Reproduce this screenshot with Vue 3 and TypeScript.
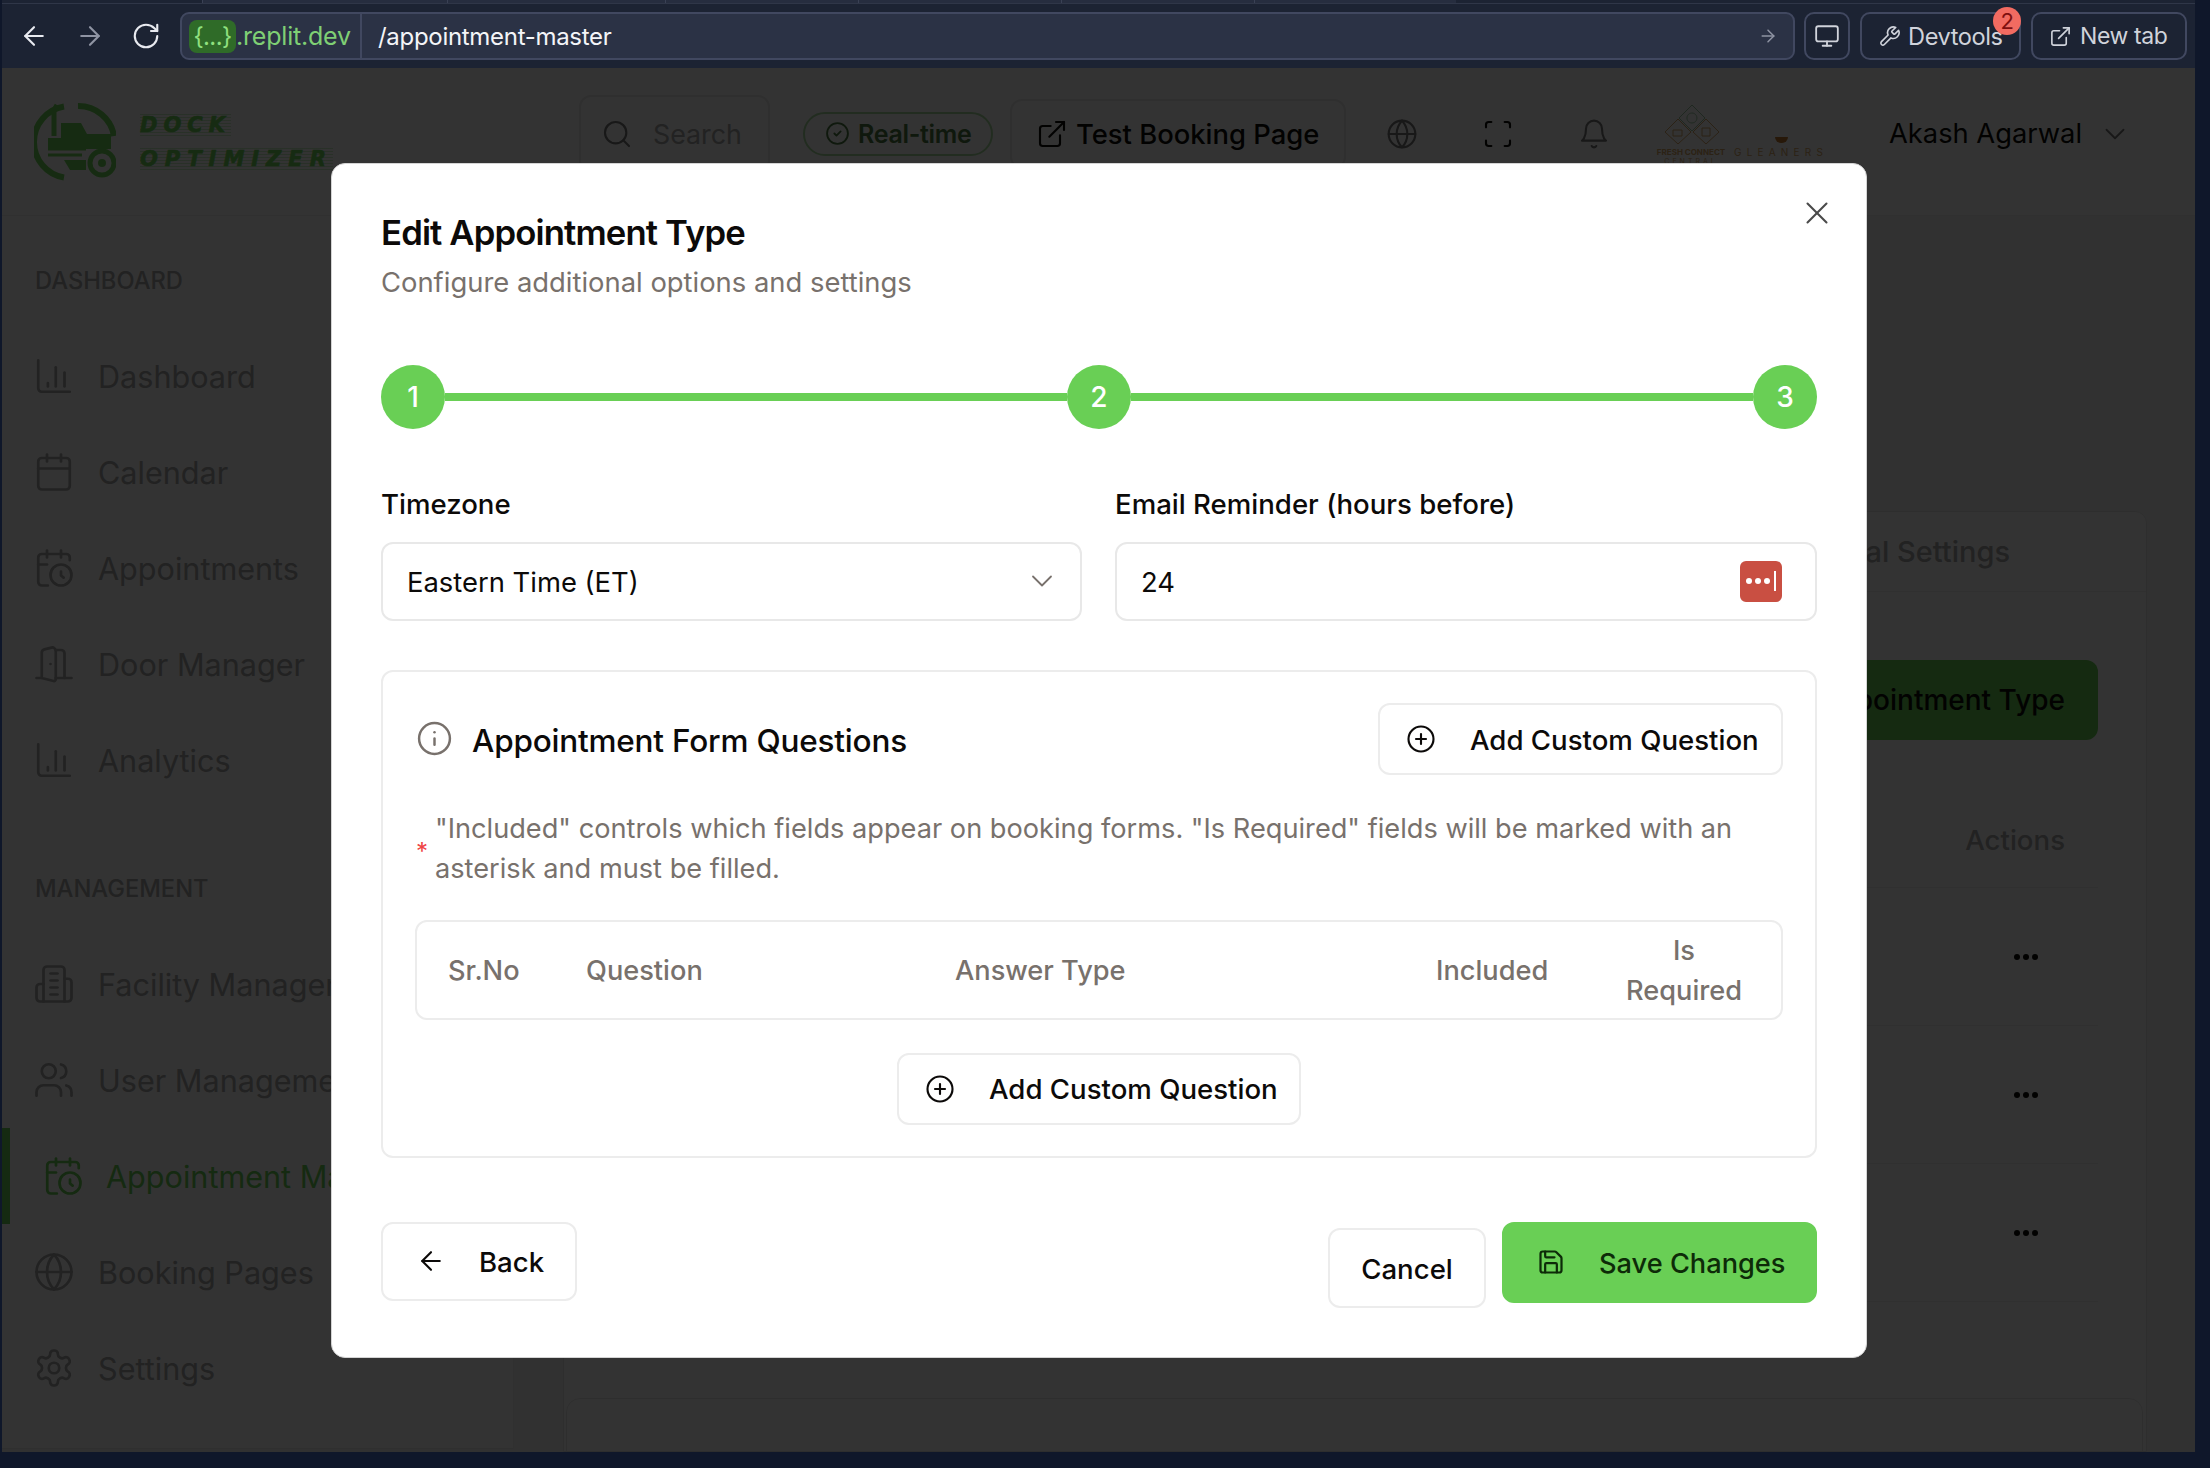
<script setup lang="ts">
import { h, type FunctionalComponent } from 'vue'

const circle = (cx: number, cy: number, r: number) =>
  `M${cx + r} ${cy}a${r} ${r} 0 1 1-${2 * r} 0 ${r} ${r} 0 1 1 ${2 * r} 0`

const paths: Record<string, string[]> = {
  chart: ['M3 3v16a2 2 0 0 0 2 2h16', 'M8.5 18v-2', 'M13 18V7', 'M18 18v-8'],
  calendar: ['M8 2v4', 'M16 2v4', 'M5 4h14a2 2 0 0 1 2 2v14a2 2 0 0 1-2 2H5a2 2 0 0 1-2-2V6a2 2 0 0 1 2-2z', 'M3 10h18'],
  calClock: ['M21 7.5V6a2 2 0 0 0-2-2H5a2 2 0 0 0-2 2v14a2 2 0 0 0 2 2h3.5', 'M16 2v4', 'M8 2v4', 'M3 10h5', 'M17.5 17.5 16 16.3V14', circle(16, 16, 6)],
  door: ['M13 20h9', 'M13 4.562v16.157a1 1 0 0 1-1.242.97L5 20V5.562a2 2 0 0 1 1.515-1.94l4-1A2 2 0 0 1 13 4.561z', 'M13 4h3a2 2 0 0 1 2 2v14', 'M10 12h-.01', 'M2 20h3'],
  building: ['M6 22V4a2 2 0 0 1 2-2h8a2 2 0 0 1 2 2v18Z', 'M6 12H4a2 2 0 0 0-2 2v6a2 2 0 0 0 2 2h2', 'M18 9h2a2 2 0 0 1 2 2v9a2 2 0 0 1-2 2h-2', 'M10 6h4', 'M10 10h4', 'M10 14h4', 'M10 18h4'],
  users: ['M16 21v-2a4 4 0 0 0-4-4H6a4 4 0 0 0-4 4v2', circle(9, 7, 4), 'M22 21v-2a4 4 0 0 0-3-3.87', 'M16 3.13a4 4 0 0 1 0 7.75'],
  globe: [circle(12, 12, 10), 'M12 2a14.5 14.5 0 0 0 0 20 14.5 14.5 0 0 0 0-20', 'M2 12h20'],
  settings: ['M12.22 2h-.44a2 2 0 0 0-2 2v.18a2 2 0 0 1-1 1.73l-.43.25a2 2 0 0 1-2 0l-.15-.08a2 2 0 0 0-2.73.73l-.22.38a2 2 0 0 0 .73 2.73l.15.1a2 2 0 0 1 1 1.72v.51a2 2 0 0 1-1 1.74l-.15.09a2 2 0 0 0-.73 2.73l.22.38a2 2 0 0 0 2.73.73l.15-.08a2 2 0 0 1 2 0l.43.25a2 2 0 0 1 1 1.73V20a2 2 0 0 0 2 2h.44a2 2 0 0 0 2-2v-.18a2 2 0 0 1 1-1.73l.43-.25a2 2 0 0 1 2 0l.15.08a2 2 0 0 0 2.73-.73l.22-.39a2 2 0 0 0-.73-2.73l-.15-.08a2 2 0 0 1-1-1.74v-.5a2 2 0 0 1 1-1.74l.15-.09a2 2 0 0 0 .73-2.73l-.22-.38a2 2 0 0 0-2.73-.73l-.15.08a2 2 0 0 1-2 0l-.43-.25a2 2 0 0 1-1-1.73V4a2 2 0 0 0-2-2z', circle(12, 12, 3)],
  search: [circle(11, 11, 8), 'm21 21-4.3-4.3'],
  check: [circle(12, 12, 10), 'm9 12 2 2 4-4'],
  external: ['M15 3h6v6', 'M10 14 21 3', 'M18 13v6a2 2 0 0 1-2 2H5a2 2 0 0 1-2-2V8a2 2 0 0 1 2-2h6'],
  frame: ['M3 7V5a2 2 0 0 1 2-2h2', 'M17 3h2a2 2 0 0 1 2 2v2', 'M21 17v2a2 2 0 0 1-2 2h-2', 'M7 21H5a2 2 0 0 1-2-2v-2'],
  bell: ['M6 8a6 6 0 0 1 12 0c0 7 3 9 3 9H3s3-2 3-9', 'M10.3 21a1.94 1.94 0 0 0 3.4 0'],
  chevron: ['m6 9 6 6 6-6'],
  wrench: ['M14.7 6.3a1 1 0 0 0 0 1.4l1.6 1.6a1 1 0 0 0 1.4 0l3.77-3.77a6 6 0 0 1-7.94 7.94l-6.91 6.91a2.12 2.12 0 0 1-3-3l6.91-6.91a6 6 0 0 1 7.94-7.94l-3.76 3.76z'],
  monitor: ['M4 3h16a2 2 0 0 1 2 2v10a2 2 0 0 1-2 2H4a2 2 0 0 1-2-2V5a2 2 0 0 1 2-2z', 'M8 21h8', 'M12 17v4'],
  save: ['M15.2 3a2 2 0 0 1 1.4.6l3.8 3.8a2 2 0 0 1 .6 1.4V19a2 2 0 0 1-2 2H5a2 2 0 0 1-2-2V5a2 2 0 0 1 2-2z', 'M17 21v-7a1 1 0 0 0-1-1H8a1 1 0 0 0-1 1v7', 'M7 3v4a1 1 0 0 0 1 1h7'],
  info: [circle(12, 12, 10), 'M12 16v-4', 'M12 8h.01'],
  plus: [circle(12, 12, 10), 'M8 12h8', 'M12 8v8'],
  back: ['m12 19-7-7 7-7', 'M19 12H5'],
  forward: ['M5 12h14', 'm12 5 7 7-7 7'],
  close: ['M18 6 6 18', 'm6 6 12 12'],
  reload: ['M21 12a9 9 0 1 1-9-9c2.52 0 4.93 1 6.74 2.74L21 8', 'M21 3v5h-5'],
}

const Icon: FunctionalComponent<{ name: string }> = (props) =>
  h(
    'svg',
    { viewBox: '0 0 24 24', fill: 'none', stroke: 'currentColor', 'stroke-linecap': 'round', 'stroke-linejoin': 'round' },
    paths[props.name].map((d) => h('path', { d })),
  )
Icon.props = ['name']

const dashboardNav = [
  { icon: 'chart', label: 'Dashboard' },
  { icon: 'calendar', label: 'Calendar' },
  { icon: 'calClock', label: 'Appointments' },
  { icon: 'door', label: 'Door Manager' },
  { icon: 'chart', label: 'Analytics' },
]
const managementNav = [
  { icon: 'building', label: 'Facility Management', active: false },
  { icon: 'users', label: 'User Management', active: false },
  { icon: 'calClock', label: 'Appointment Master', active: true },
  { icon: 'globe', label: 'Booking Pages', active: false },
  { icon: 'settings', label: 'Settings', active: false },
]
const tabWidths = [245, 218, 193, 203, 193, 202]
</script>

<template>
  <div class="root">
    <div class="tabstrip">
      <span v-for="(w, i) in tabWidths" :key="i" class="tabcell" :style="{ width: w + 'px' }"></span>
    </div>
    <div class="toolbar">
      <Icon name="back" class="nav-i first" />
      <Icon name="forward" class="nav-i dim" />
      <Icon name="reload" class="nav-i" />
      <div class="address">
        <span class="chip">{...}</span>
        <span class="domain">.replit.dev</span>
        <span class="path">/appointment-master</span>
        <Icon name="forward" class="go" />
      </div>
      <button class="tbtn mon"><Icon name="monitor" class="t-i big" /></button>
      <button class="tbtn dev">
        <Icon name="wrench" class="t-i" />Devtools
        <span class="badge">2</span>
      </button>
      <button class="tbtn newtab"><Icon name="external" class="t-i" />New tab</button>
    </div>

    <div class="page">
      <header class="hdr">
        <div class="brand">
          <svg class="truck" viewBox="0 0 82 80" fill="none">
            <path d="M30 4.5A36 36 0 0 0 30 75.5" stroke="#70d85a" stroke-width="6" />
            <path d="M44 4a36 36 0 0 1 36 30" stroke="#70d85a" stroke-width="6" />
            <path d="M20 8v26M20 8l3-5" stroke="#70d85a" stroke-width="5" />
            <path d="M14 36h13V21h20l6 11h24v15H14z" fill="#70d85a" />
            <path d="M14 41h50M14 47h38M14 53h34" stroke="#70d85a" stroke-width="3" />
            <path d="M30 58h22v10H36" fill="#70d85a" />
            <path d="M68 61m-12 0a12 12 0 1 1 24 0 12 12 0 1 1-24 0" stroke="#70d85a" stroke-width="5" fill="#fff" />
            <path d="M68 61m-4 0a4 4 0 1 1 8 0 4 4 0 1 1-8 0" fill="#70d85a" />
          </svg>
          <div class="brandtext">
            <span class="bline">DOCK</span>
            <span class="bline opt">OPTIMIZER</span>
          </div>
        </div>
        <div class="searchbox"><Icon name="search" class="h-i" /><span>Search</span></div>
        <div class="pill"><Icon name="check" class="p-i" />Real-time</div>
        <div class="testbtn"><Icon name="external" class="h-i dark" />Test Booking Page</div>
        <div class="hicon first"><Icon name="globe" class="h-i" /></div>
        <div class="hicon"><Icon name="frame" class="h-i dark" /></div>
        <div class="hicon"><Icon name="bell" class="h-i" /></div>
        <div class="partners">
          <div class="fresh">
            <svg class="diamonds" viewBox="0 0 78 40" fill="none">
              <path d="M40 1l13 13-13 13-13-13z" stroke="#9ac9a0" />
              <path d="M40 9a5 5 0 1 1-.1 0" stroke="#9ac9a0" />
              <path d="M26 15l13 13-13 12-13-12z" stroke="#d8a868" />
              <path d="M54 15l13 13-13 12-13-12z" stroke="#d8a868" />
              <path d="M21 26h9v6h-9zM50 24h8v8h-8z" stroke="#d8a868" />
            </svg>
            <span class="fc">FRESH CONNECT</span>
            <span class="central">CENTRAL</span>
          </div>
          <div class="gleaners">
            <span class="bowl"></span>
            <span class="gl">GLEANERS</span>
          </div>
        </div>
        <div class="user">Akash Agarwal</div>
        <Icon name="chevron" class="u-chev" />
      </header>

      <div class="body">
        <aside class="side">
          <div class="sec first">DASHBOARD</div>
          <div v-for="item in dashboardNav" :key="item.label" class="item">
            <Icon :name="item.icon" class="s-i" /><span class="s-t">{{ item.label }}</span>
          </div>
          <div class="sec second">MANAGEMENT</div>
          <div v-for="item in managementNav" :key="item.label" class="item" :class="{ active: item.active }">
            <Icon :name="item.icon" class="s-i" /><span class="s-t">{{ item.label }}</span>
          </div>
        </aside>
        <main class="main">
          <section class="panel">
            <div class="ptabs"><span>General Settings</span></div>
            <div class="pbar"><span class="newbtn">New Appointment Type</span></div>
            <div class="thead"><span>Actions</span></div>
            <div v-for="n in 3" :key="n" class="trow"><span class="dots"><i></i><i></i><i></i></span></div>
            <div class="card2"></div>
          </section>
        </main>
      </div>

      <div class="overlay">
        <div class="modal">
          <Icon name="close" class="closex" />
          <h2 class="title">Edit Appointment Type</h2>
          <p class="sub">Configure additional options and settings</p>

          <div class="stepper">
            <span class="dot">1</span><span class="bar"></span>
            <span class="dot">2</span><span class="bar"></span>
            <span class="dot">3</span>
          </div>

          <div class="fields">
            <div class="f left">
              <label class="lab">Timezone</label>
              <div class="inp">
                <span>Eastern Time (ET)</span>
                <Icon name="chevron" class="sel-chev" />
              </div>
            </div>
            <div class="f right">
              <label class="lab">Email Reminder (hours before)</label>
              <div class="inp">
                <span>24</span>
                <span class="pw"><i></i><i></i><i></i><b></b></span>
              </div>
            </div>
          </div>

          <section class="qcard">
            <div class="qhead">
              <div class="qtitle"><Icon name="info" class="info-i" /><h3>Appointment Form Questions</h3></div>
              <button class="btn add"><Icon name="plus" class="plus-i" />Add Custom Question</button>
            </div>
            <div class="hint">
              <span class="ast">*</span>
              <p>"Included" controls which fields appear on booking forms. "Is Required" fields will be marked with an asterisk and must be filled.</p>
            </div>
            <div class="qtable">
              <span>Sr.No</span>
              <span>Question</span>
              <span>Answer Type</span>
              <span>Included</span>
              <span class="req">Is Required</span>
            </div>
            <div class="addrow">
              <button class="btn add"><Icon name="plus" class="plus-i" />Add Custom Question</button>
            </div>
          </section>

          <footer class="foot">
            <button class="btn backbtn"><Icon name="back" class="b-i" />Back</button>
            <div class="actions">
              <button class="btn cancel">Cancel</button>
              <button class="btn savebtn"><Icon name="save" class="sv-i" />Save Changes</button>
            </div>
          </footer>
        </div>
      </div>
    </div>
  </div>
</template>

<style>
html, body { margin: 0; background: #0f172a; }
</style>

<style scoped>
* { box-sizing: border-box; }
.root { width: 2210px; height: 1468px; padding: 0 15px 16px 2px; background: #0f172a; display: flex; flex-direction: column; overflow: hidden; font-family: Inter, "Noto Sans", sans-serif; color: #0c0a09; }

.tabstrip { height: 4px; flex: none; background: #1c2333; display: flex; padding-left: 200px; border-bottom: 1px solid #2f3648; }
.tabcell { background: #262d3f; border-left: 1px solid #3a4155; }

.toolbar { height: 64px; flex: none; background: #1c2333; display: flex; align-items: center; color: #e8eaf0; }
.nav-i { width: 30px; height: 30px; stroke-width: 1.7; flex: none; margin-right: 26px; }
.nav-i.first { margin-left: 17px; }
.nav-i.dim { color: #8f94a3; }
.nav-i:nth-of-type(3) { margin-right: 19px; }
.address { width: 1615px; height: 48px; flex: none; background: #2b3245; border: 2px solid #414860; border-radius: 9px; display: flex; align-items: center; font-size: 24px; }
.chip { width: 47px; height: 33px; margin-left: 7px; background: #2f6b28; color: #8fe07f; border-radius: 8px; display: flex; align-items: center; justify-content: center; font-size: 24px; letter-spacing: -0.6px; }
.domain { width: 126px; padding-right: 8px; height: 44px; line-height: 44px; font-size: 25px; color: #7fd074; border-right: 2px solid #414860; letter-spacing: -0.2px; white-space: nowrap; }
.path { margin-left: 16px; color: #f4f5f8; letter-spacing: -0.3px; }
.go { width: 20px; height: 20px; margin-left: auto; margin-right: 15px; stroke-width: 1.8; color: #8f94a3; }
.tbtn { position: relative; height: 48px; flex: none; background: #1c2333; border: 2px solid #414860; border-radius: 10px; color: #d0d3db; font: 23.6px Inter, sans-serif; letter-spacing: -0.4px; display: flex; align-items: center; padding: 0; }
.t-i { width: 23px; height: 23px; stroke-width: 1.7; flex: none; }
.t-i.big { width: 26px; height: 26px; }
.mon { width: 46px; margin-left: 9px; justify-content: center; }
.dev { width: 161px; margin-left: 10px; padding-left: 16px; gap: 7px; }
.newtab { width: 156px; margin-left: 10px; padding-left: 16px; gap: 8px; font-size: 23px; }
.badge { position: absolute; top: -7px; left: 131px; width: 28px; height: 28px; border-radius: 50%; background: #f26b61; color: #7f1010; font-size: 22px; display: flex; align-items: center; justify-content: center; }

.page { position: relative; flex: 1; min-height: 0; overflow: hidden; background: #f5f5f5; display: flex; flex-direction: column; }
.hdr { height: 148px; flex: none; background: #fff; display: flex; align-items: center; padding: 0 0 16px 32px; border-bottom: 1px solid #f0f0f0; }
.brand { width: 545px; flex: none; display: flex; align-items: center; gap: 24px; margin-top: 16px; }
.truck { width: 82px; height: 80px; flex: none; }
.brandtext { display: flex; flex-direction: column; gap: 12px; }
.bline { font: italic 700 21px "DejaVu Sans", sans-serif; color: #70d85a; letter-spacing: 6px; line-height: 22px; white-space: nowrap; -webkit-text-stroke: 0.7px #70d85a; background: repeating-linear-gradient(0deg, rgba(112, 216, 90, .35) 0 1px, transparent 1px 3px); width: fit-content; }
.bline.opt { letter-spacing: 7px; }
.searchbox { width: 191px; height: 78px; flex: none; border: 2px solid #e8e8e8; border-radius: 12px; display: flex; align-items: center; padding-left: 20px; gap: 20px; font-size: 26.8px; color: #a8a8a8; }
.h-i { width: 32px; height: 32px; stroke-width: 1.6; flex: none; color: #777; }
.h-i.dark { color: #0c0a09; }
.pill { width: 190px; height: 44px; flex: none; margin-left: 33px; border: 2px solid #a8dda0; border-radius: 22px; display: flex; align-items: center; padding-left: 20px; gap: 8px; font-size: 25px; font-weight: 600; letter-spacing: -0.3px; color: #4a7a40; }
.p-i { width: 25px; height: 25px; stroke-width: 1.8; flex: none; }
.testbtn { width: 336px; height: 70px; flex: none; margin-left: 17px; border: 2px solid #e8e8e8; border-radius: 12px; display: flex; align-items: center; padding-left: 24px; gap: 8px; font-size: 27.4px; font-weight: 500; white-space: nowrap; }
.hicon { width: 96px; flex: none; display: flex; justify-content: center; }
.hicon.first { margin-left: 8px; }
.partners { width: 172px; height: 60px; margin-left: 10px; flex: none; display: flex; gap: 8px; }
.fresh { width: 78px; flex: none; display: flex; flex-direction: column; align-items: center; }
.diamonds { width: 78px; height: 40px; flex: none; }
.fc { font-size: 8px; font-weight: 700; color: #d8a868; white-space: nowrap; line-height: 12px; margin-top: 2px; }
.central { font-size: 7px; color: #d8a868; letter-spacing: 3px; line-height: 8px; }
.gleaners { width: 86px; display: flex; flex-direction: column; align-items: center; padding-top: 33px; }
.bowl { width: 13px; height: 6px; background: #c07a30; border-radius: 0 0 7px 7px; }
.gl { font-size: 10px; color: #d8a868; letter-spacing: 5.2px; line-height: 14px; margin-top: 2px; white-space: nowrap; }
.user { margin-left: 65px; font-size: 27.3px; white-space: nowrap; }
.u-chev { width: 34px; height: 34px; stroke-width: 1.3; margin-left: 16px; color: #777; flex: none; }

.body { flex: 1; min-height: 0; display: flex; }
.side { width: 512px; height: 1233px; flex: none; background: #fff; border-right: 1px solid #f0f0f0; border-bottom: 1px solid #ececec; overflow: hidden; }
.sec { height: 34px; line-height: 34px; padding-left: 33px; font-size: 23.7px; font-weight: 500; color: #a8a8a8; margin-bottom: 30px; }
.sec.first { margin-top: 48px; }
.sec.second { margin-top: 64px; }
.item { height: 96px; display: flex; align-items: center; padding-left: 31px; gap: 23px; color: #a8a8a8; white-space: nowrap; }
.s-i { width: 42px; height: 42px; stroke-width: 1.55; flex: none; }
.s-t { font-size: 30.6px; }
.item.active { border-left: 8px solid #69cf55; padding-left: 32px; gap: 22px; color: #69cf55; }

.main { flex: 1; min-width: 0; padding: 295px 48px 0 49px; }
.panel { position: relative; height: 100%; background: #fff; border: 1px solid #e7e7e7; border-radius: 12px 12px 0 0; padding-right: 48px; }
.ptabs { height: 80px; margin-right: -48px; padding-right: 136px; display: flex; align-items: center; justify-content: flex-end; font-size: 29px; font-weight: 500; color: #a8a8a8; border-bottom: 1px solid #f0f0f0; }
.pbar { height: 80px; margin-top: 68px; display: flex; justify-content: flex-end; }
.newbtn { height: 80px; padding: 0 33px; background: #69cf55; border-radius: 12px; display: flex; align-items: center; font-size: 28px; font-weight: 500; }
.thead { height: 96px; margin-top: 52px; padding-right: 33px; display: flex; align-items: center; justify-content: flex-end; font-size: 27.6px; font-weight: 500; color: #a8a8a8; border-bottom: 1px solid #eee; }
.trow { height: 138px; padding-right: 60px; display: flex; align-items: center; justify-content: flex-end; border-bottom: 1px solid #eee; }
.trow:last-of-type { border-bottom: 0; }
.dots { display: flex; gap: 3px; }
.dots i { width: 6px; height: 6px; border-radius: 50%; background: #0c0a09; }
.card2 { margin: 96px -45px 0 2px; height: 200px; border: 1px solid #e7e7e7; border-radius: 14px; }

.overlay { position: absolute; inset: 0; background: rgba(0, 0, 0, .8); display: flex; align-items: center; justify-content: center; }
.modal { position: relative; width: 1536px; height: 1195px; margin-left: 1px; background: #fff; border-radius: 14px; padding: 50px 49px 50px 49px; border: 1px solid #d4d4d4; }
.closex { position: absolute; top: 30px; right: 30px; width: 38px; height: 38px; stroke-width: 1.3; color: #4a4a4a; }
.title { margin: -2px 0 0; font-size: 34.7px; line-height: 40px; font-weight: 600; letter-spacing: -0.87px; }
.sub { margin: 10px 0 0; font-size: 27.4px; line-height: 40px; color: #78716c; }
.stepper { display: flex; align-items: center; margin-top: 63px; }
.dot { width: 64px; height: 64px; flex: none; border-radius: 50%; background: #69cf55; color: #fff; font-size: 28px; font-weight: 500; display: flex; align-items: center; justify-content: center; }
.bar { flex: 1; height: 8px; background: #69cf55; }
.fields { display: flex; gap: 33px; margin-top: 57px; }
.f.left { width: 701px; flex: none; }
.f.right { flex: 1; }
.lab { display: block; font-size: 27.6px; line-height: 36px; font-weight: 500; margin-bottom: 20px; }
.inp { height: 79px; border: 2px solid #e8e8e8; border-radius: 12px; display: flex; align-items: center; justify-content: space-between; padding: 2px 24px 0; font-size: 27.4px; }
.sel-chev { width: 36px; height: 36px; stroke-width: 1.2; color: #78716c; margin: -2px -4px 0 0; }
.pw { width: 42px; height: 41px; margin: -2px 9px 0 0; background: #c94f42; border-radius: 6px; display: flex; align-items: center; justify-content: center; gap: 3px; }
.pw i { width: 6px; height: 6px; border-radius: 50%; background: #fff; }
.pw b { width: 2px; height: 20px; background: #fff; margin-left: 1px; }
.qcard { margin-top: 49px; height: 488px; border: 2px solid #ececec; border-radius: 12px; padding: 31px 31px 0 33px; }
.qhead { display: flex; align-items: center; justify-content: space-between; }
.qtitle { display: flex; align-items: center; gap: 19px; }
.qtitle h3 { margin: 0; padding-top: 3px; font-size: 31.5px; font-weight: 500; letter-spacing: -0.2px; }
.info-i { width: 37px; height: 37px; stroke-width: 1.6; color: #78716c; flex: none; }
.btn { font-family: Inter, sans-serif; color: #0c0a09; background: #fff; border: 2px solid #ececec; border-radius: 12px; font-size: 27.6px; font-weight: 500; display: flex; align-items: center; padding: 2px 0 0; white-space: nowrap; }
.add { height: 72px; width: 404px; padding-left: 26px; gap: 34px; }
.qhead .add { width: 405px; margin-right: 1px; }
.addrow .add { padding-top: 0; }
.plus-i { width: 30px; height: 30px; stroke-width: 1.7; flex: none; margin-top: -2px; }
.addrow .plus-i { margin-top: 0; }
.hint { display: flex; align-items: center; margin-top: 34px; margin-left: -1px; }
.ast { width: 20px; flex: none; color: #ef4444; font-size: 24px; line-height: 24px; padding-top: 6px; padding-left: 1px; }
.hint p { margin: 0; font-size: 27.2px; line-height: 40px; color: #78716c; }
.qtable { margin: 31px 1px 0 -1px; height: 100px; border: 2px solid #ececec; border-radius: 12px; display: grid; grid-template-columns: 138px 369px 481px 173px 150px; align-items: center; padding: 2px 0 0 31px; font-size: 27.2px; line-height: 40px; font-weight: 500; color: #78716c; }
.req { width: min-content; justify-self: center; text-align: center; }
.addrow { display: flex; justify-content: center; margin: 33px 2px 0 0; }
.foot { display: flex; justify-content: space-between; align-items: flex-start; margin-top: 64px; }
.backbtn { width: 196px; height: 79px; padding-left: 33px; gap: 33px; }
.b-i { width: 30px; height: 30px; stroke-width: 1.7; flex: none; margin-top: -2px; }
.actions { display: flex; align-items: flex-start; gap: 16px; }
.cancel { width: 158px; height: 80px; margin-top: 6px; justify-content: center; }
.savebtn { width: 315px; height: 81px; background: #69cf55; border-color: #69cf55; padding-left: 33px; gap: 34px; color: #0d2b08; font-size: 27.2px; }
.sv-i { width: 28px; height: 28px; stroke-width: 1.9; flex: none; margin-top: -2px; }
</style>
